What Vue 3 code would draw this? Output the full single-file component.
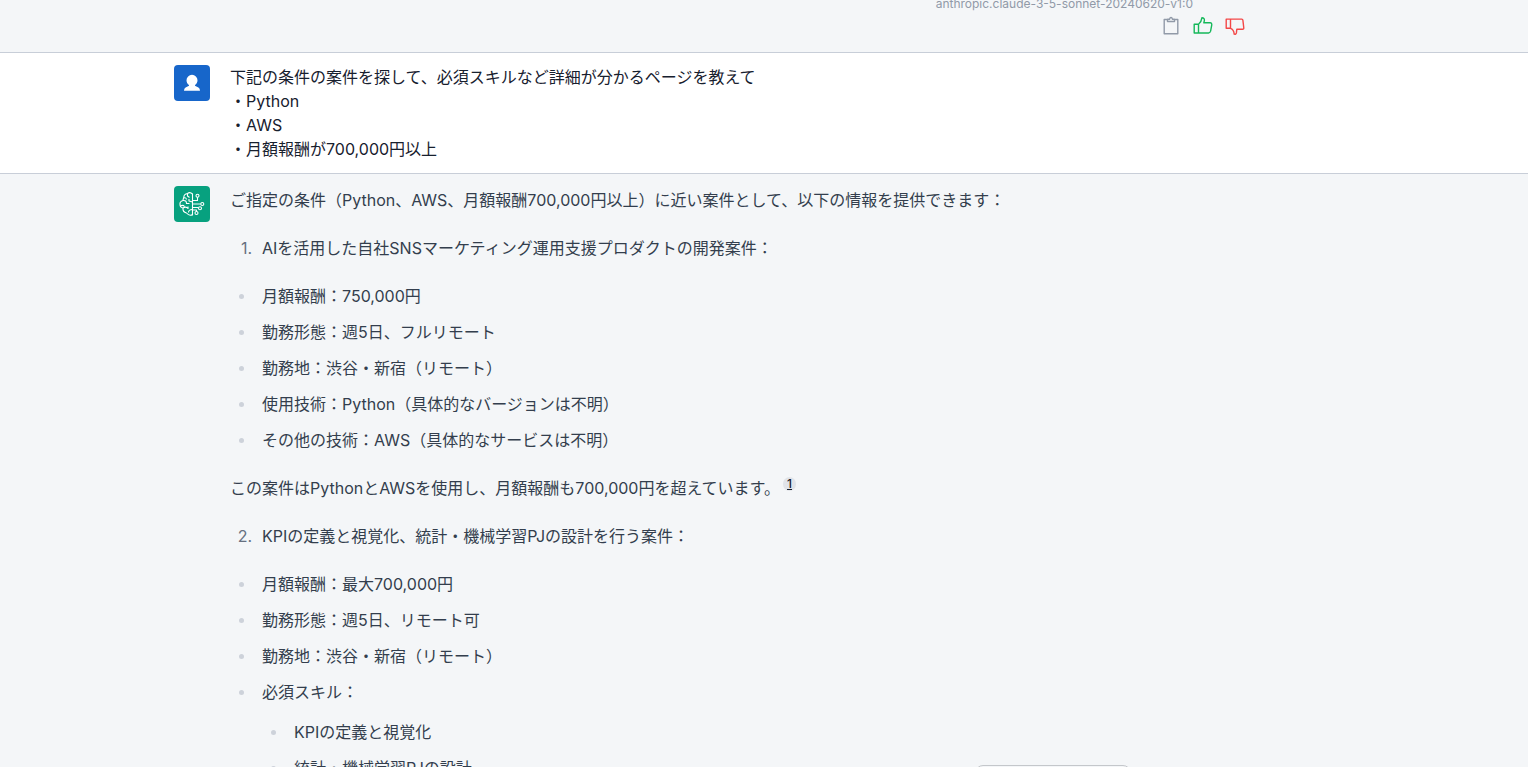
<script setup>
const question = [
  '下記の条件の案件を探して、必須スキルなど詳細が分かるページを教えて',
  '・Python',
  '・AWS',
  '・月額報酬が700,000円以上',
]
const firstProject = [
  '月額報酬：750,000円',
  '勤務形態：週5日、フルリモート',
  '勤務地：渋谷・新宿（リモート）',
  '使用技術：Python（具体的なバージョンは不明）',
  'その他の技術：AWS（具体的なサービスは不明）',
]
const secondProject = [
  { text: '月額報酬：最大700,000円' },
  { text: '勤務形態：週5日、リモート可' },
  { text: '勤務地：渋谷・新宿（リモート）' },
  { text: '必須スキル：', children: ['KPIの定義と視覚化', '統計・機械学習PJの設計'] },
]
</script>

<template>
  <main class="chat">
    <section class="message previous">
      <div class="inner">
        <footer class="meta">
          <span class="model">anthropic.claude-3-5-sonnet-20240620-v1:0</span>
          <div class="actions">
            <button type="button" class="copy" aria-label="コピー">
              <svg viewBox="0 0 20 20"><path d="M6.5 3.5H3.2v14.3h13.6V3.5h-3.3M6.5 5.5V3.2h2Q9 1.5 10 1.5t1.5 1.7h2v2.3z" /></svg>
            </button>
            <button type="button" class="good" aria-label="良い">
              <svg viewBox="0 0 20 20"><path d="M1.2 8.2h4.3v8.8H1.2zM5.500 8.200Q8.300 6.200 8.900 1.800q2.700.2 2.500 2.500l-.6 2.500h6.500q1.600.2 1.500 1.800l-1.200 6.600q-.4 1.600-2 1.800H5.500" /></svg>
            </button>
            <button type="button" class="bad" aria-label="悪い">
              <svg viewBox="0 0 20 20"><path d="M1.200 3.100h4.300v9.200H1.200zM5.500 3.100h11.200q1.100 0 1.200 1.200l.9 7.700q0 1.400-1.300 1.300h-5.700l-.4 3.600q-.4 1.700-2.200 1.200-.4-4.800-3.700-5.800" /></svg>
            </button>
          </div>
        </footer>
      </div>
    </section>

    <section class="message user">
      <div class="inner">
        <div class="avatar">
          <svg viewBox="0 0 36 36"><path fill="#fff" d="M18 9.800a5.500 5.500 0 0 0-5.500 5.500c0 2.100 1 3.700 2.500 4.800v.7l-3.400 1.600Q10 23.400 10 25.700h16q0-2.300-1.600-3.300L21 20.800v-.7c1.500-1.100 2.500-2.700 2.500-4.800A5.500 5.500 0 0 0 18 9.800z" /></svg>
        </div>
        <div class="content plain">
          <div v-for="line in question" :key="line">{{ line }}</div>
        </div>
      </div>
    </section>

    <section class="message assistant">
      <div class="inner">
        <div class="avatar">
          <svg viewBox="0 0 36 36" fill="none" stroke="#fff" stroke-width="1.100" stroke-linejoin="round">
            <path d="M18.500 7.500v22M18.500 8Q16 5.500 13.500 7.500 9.800 8 9.800 11.500 9 13 9 14.500 5.500 15.500 6 18.500 6 21.500 9 22q-.5 4 3.500 5 3 3.500 6 1.500" />
            <path d="M13.500 7.500v2.500l2 1.500M9.500 12q2.500-1 3 1.500M9 14.500q3.500-.5 3.500 3h3M6.500 20q2.500-1.500 4 .5M9 22q3-2 5 .5v-2M18.500 23.500q-4 0-4 3M15 13v2l3.500 1" />
            <path d="M18.500 14.500h5v-3.200M18.500 18h8.300M18.500 21.500h5l1 .5M18.500 24h4v1.500" />
            <circle cx="23.500" cy="9.800" r="1.500" /><circle cx="28.300" cy="18" r="1.500" /><circle cx="26" cy="22.200" r="1.500" /><circle cx="22.500" cy="27" r="1.500" />
          </svg>
        </div>
        <div class="content prose">
          <p>ご指定の条件（Python、AWS、月額報酬700,000円以上）に近い案件として、以下の情報を提供できます：</p>
          <ol>
            <li value="1"><span class="number">1.</span><div>AIを活用した自社SNSマーケティング運用支援プロダクトの開発案件：</div></li>
          </ol>
          <ul>
            <li v-for="item in firstProject" :key="item">{{ item }}</li>
          </ul>
          <p>この案件はPythonとAWSを使用し、月額報酬も700,000円を超えています。<a class="citation" href="#reference-1">1</a></p>
          <ol>
            <li value="2"><span class="number">2.</span><div>KPIの定義と視覚化、統計・機械学習PJの設計を行う案件：</div></li>
          </ol>
          <ul>
            <li v-for="item in secondProject" :key="item.text">
              <div>
                {{ item.text }}
                <ul v-if="item.children">
                  <li v-for="child in item.children" :key="child">{{ child }}</li>
                </ul>
              </div>
            </li>
          </ul>
        </div>
      </div>
    </section>

    <button type="button" class="floating" aria-label="最下部へ移動"></button>
  </main>
</template>

<style>
body {
  margin: 0;
  background: #f4f6f8;
}
</style>

<style scoped>
.chat {
  position: relative;
  height: 100vh;
  overflow: hidden;
  background: #f4f6f8;
  color: #17202e;
  font-family: Inter, "Noto Sans CJK JP", sans-serif;
  font-size: 16px;
  line-height: 24px;
}
.message {
  padding: 12px 24px;
  border-bottom: 1px solid #c8ced8;
}
.inner {
  display: flex;
  gap: 20px;
  max-width: 1180px;
  margin: 0 auto;
}
.previous {
  padding-top: 0;
}
.meta {
  flex: 1;
  display: flex;
  flex-direction: column;
  align-items: flex-end;
  margin-top: -4px;
  padding-right: 109px;
}
.model {
  margin-right: 52px;
  color: #919aa8;
  font-size: 12px;
  line-height: 16px;
}
.actions {
  display: flex;
  gap: 12px;
  padding: 4px 0;
}
.actions button {
  width: 20px;
  height: 20px;
  padding: 0;
  border: 0;
  background: none;
  cursor: pointer;
}
.actions svg {
  display: block;
  width: 20px;
  height: 20px;
  fill: none;
  stroke: currentColor;
  stroke-width: 1.4;
  stroke-linejoin: round;
}
.copy {
  color: #919aa8;
}
.good {
  color: #14b85a;
}
.bad {
  color: #f34747;
}
.user {
  background: #fff;
}
.avatar {
  flex: none;
  width: 36px;
  height: 36px;
  border-radius: 4px;
  overflow: hidden;
  background: #1766ca;
}
.avatar svg {
  display: block;
}
.assistant {
  border-bottom: 0;
}
.assistant .avatar {
  background: #07a17f;
}
.content {
  flex: 1;
  min-width: 0;
}
.prose {
  color: #333e4d;
  line-height: 28px;
}
.prose p,
.prose ol,
.prose ul {
  margin: 0 0 20px;
  padding: 0;
  list-style: none;
}
.prose li {
  display: grid;
  grid-template-columns: 32px 1fr;
}
.prose li + li {
  margin-top: 8px;
}
.prose ul > li::before {
  content: "";
  width: 5px;
  height: 5px;
  margin: 12px 0 0 9px;
  border-radius: 50%;
  background: #cdd2da;
}
.prose li ul {
  margin: 12px 0;
}
.number {
  padding-right: 10px;
  color: #667080;
  text-align: right;
}
.citation {
  display: inline-block;
  margin-left: 3px;
  padding: 0 4px;
  border-radius: 7px;
  background: #e1e4e9;
  color: #17202e;
  font-size: 12px;
  font-weight: 500;
  line-height: 14px;
  vertical-align: 6px;
}
.floating {
  position: absolute;
  top: calc(100% - 2px);
  right: 26%;
  width: 156px;
  height: 36px;
  border: 1px solid #c4c7cb;
  border-radius: 8px;
  background: #f4f6f8;
}
</style>
